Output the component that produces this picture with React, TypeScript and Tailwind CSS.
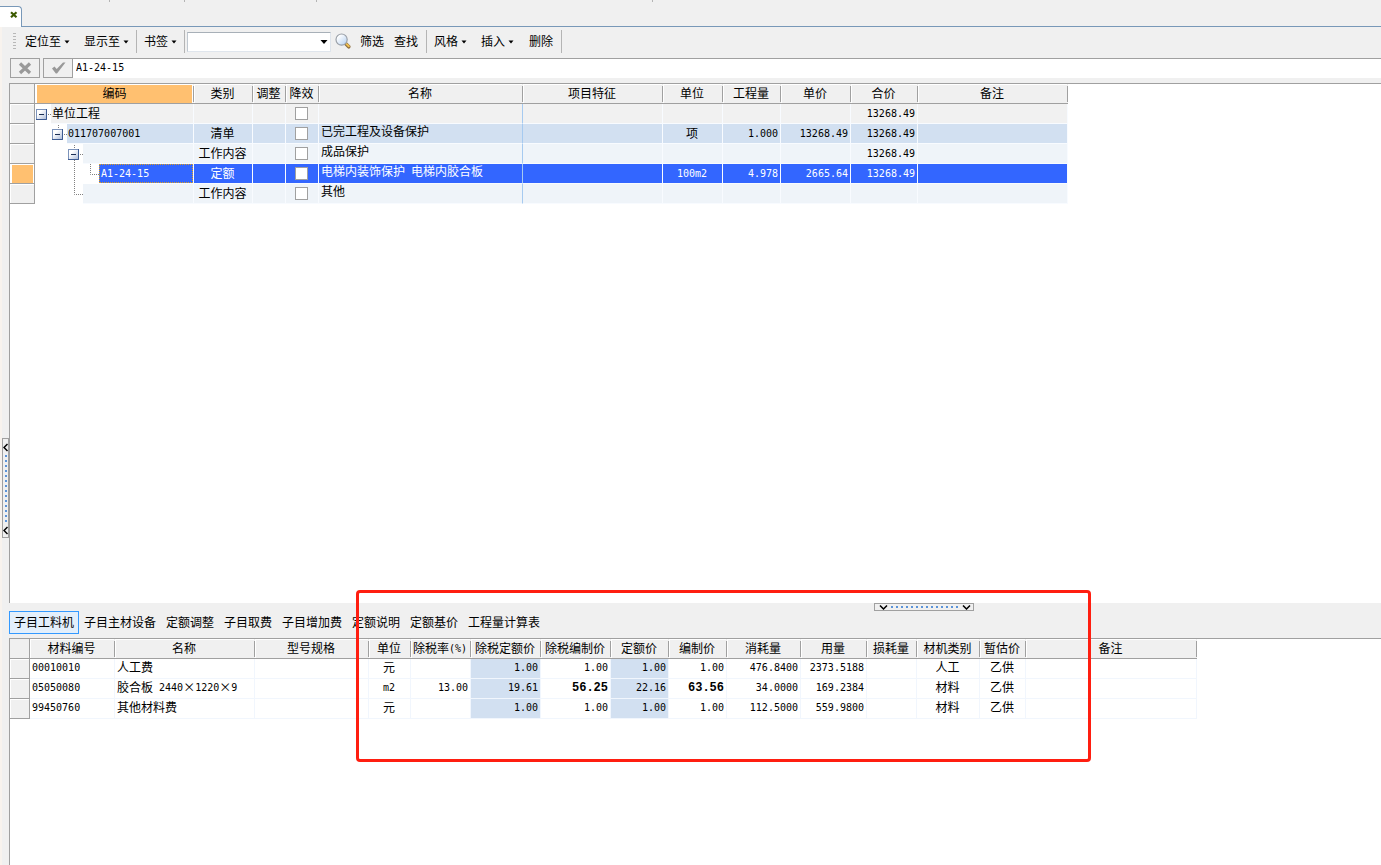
import type { ReactNode } from 'react';

type Align = 'left' | 'center' | 'right';

interface Column {
  title: string;
  width: number;
  align: Align;
  shaded?: boolean;
}

interface WorkItem {
  level: number;
  expandable: boolean;
  tone: 'root' | 'list' | 'plain' | 'selected';
  cells: string[];
}

const workColumns: Column[] = [
  { title: '编码', width: 159, align: 'left' },
  { title: '类别', width: 59, align: 'center' },
  { title: '调整', width: 33, align: 'center' },
  { title: '降效', width: 33, align: 'center' },
  { title: '名称', width: 204, align: 'left' },
  { title: '项目特征', width: 140, align: 'left' },
  { title: '单位', width: 60, align: 'center' },
  { title: '工程量', width: 58, align: 'right' },
  { title: '单价', width: 70, align: 'right' },
  { title: '合价', width: 67, align: 'right' },
  { title: '备注', width: 150, align: 'left' },
];

const workItems: WorkItem[] = [
  { level: 1, expandable: true, tone: 'root', cells: ['单位工程', '', '', '', '', '', '', '', '', '13268.49', ''] },
  { level: 2, expandable: true, tone: 'list', cells: ['011707007001', '清单', '', '', '已完工程及设备保护', '', '项', '1.000', '13268.49', '13268.49', ''] },
  { level: 3, expandable: true, tone: 'plain', cells: ['', '工作内容', '', '', '成品保护', '', '', '', '', '13268.49', ''] },
  { level: 4, expandable: false, tone: 'selected', cells: ['A1-24-15', '定额', '', '', '电梯内装饰保护 电梯内胶合板', '', '100m2', '4.978', '2665.64', '13268.49', ''] },
  { level: 3, expandable: false, tone: 'plain', cells: ['', '工作内容', '', '', '其他', '', '', '', '', '', ''] },
];

const materialColumns: Column[] = [
  { title: '材料编号', width: 85, align: 'left' },
  { title: '名称', width: 140, align: 'left' },
  { title: '型号规格', width: 114, align: 'left' },
  { title: '单位', width: 42, align: 'center' },
  { title: '除税率(%)', width: 60, align: 'right' },
  { title: '除税定额价', width: 70, align: 'right', shaded: true },
  { title: '除税编制价', width: 70, align: 'right' },
  { title: '定额价', width: 58, align: 'right', shaded: true },
  { title: '编制价', width: 58, align: 'right' },
  { title: '消耗量', width: 74, align: 'right' },
  { title: '用量', width: 66, align: 'right' },
  { title: '损耗量', width: 50, align: 'right' },
  { title: '材机类别', width: 63, align: 'center' },
  { title: '暂估价', width: 46, align: 'center' },
  { title: '备注', width: 171, align: 'left' },
];

const materials: string[][] = [
  ['00010010', '人工费', '', '元', '', '1.00', '1.00', '1.00', '1.00', '476.8400', '2373.5188', '', '人工', '乙供', ''],
  ['05050080', '胶合板 2440×1220×9', '', 'm2', '13.00', '19.61', '56.25', '22.16', '63.56', '34.0000', '169.2384', '', '材料', '乙供', ''],
  ['99450760', '其他材料费', '', '元', '', '1.00', '1.00', '1.00', '1.00', '112.5000', '559.9800', '', '材料', '乙供', ''],
];

const boldValues = ['56.25', '63.56'];

const detailTabs = ['子目工料机', '子目主材设备', '定额调整', '子目取费', '子目增加费', '定额说明', '定额基价', '工程量计算表'];

const toneClass = {
  root: 'bg-[#f1f1f1]',
  list: 'bg-[#d2e0f1]',
  plain: 'bg-[#eff4f9]',
  selected: 'bg-[#3366ff] text-white',
};

const alignClass = {
  left: 'justify-start pl-0.5',
  center: 'justify-center pr-px',
  right: 'justify-end pr-0.5',
};

// Latin runs use a half-width mono face, everything else stays in the CJK face
function Runs({ text, bold }: { text: string; bold?: boolean }) {
  const runs = text.match(/[\x20-\x7e]+|[^\x20-\x7e]+/g) ?? [];
  return (
    <>
      {runs.map((run, i) =>
        /^[\x20-\x7e]/.test(run) ? (
          <span
            key={i}
            className={
              bold
                ? "whitespace-pre font-['Liberation_Mono',monospace] text-[12px] font-bold"
                : "whitespace-pre font-['DejaVu_Sans_Mono',monospace] text-[10px]"
            }
          >
            {run}
          </span>
        ) : (
          <span key={i} className="pb-0.5 whitespace-pre">{run}</span>
        ),
      )}
    </>
  );
}

function Caret() {
  return (
    <svg width="6" height="4" viewBox="0 0 6 4" aria-hidden="true">
      <path d="M0.5 0.5h5L3 3.5z" fill="#000" />
    </svg>
  );
}

function MenuButton({ children }: { children: ReactNode }) {
  return (
    <button className="flex h-6 shrink-0 items-center gap-[3px] px-[7px] hover:bg-[#e3effb]">
      <span className="pb-0.5">{children}</span>
      <Caret />
    </button>
  );
}

function Divider() {
  return <span className="h-[23px] w-px shrink-0 bg-[#b4b4b4]" />;
}

function SearchIcon() {
  return (
    <svg width="17" height="17" viewBox="0 0 17 17" aria-hidden="true">
      <defs>
        <linearGradient id="lens" x1="0" y1="0" x2="1" y2="1">
          <stop offset="0.2" stopColor="#ffffff" />
          <stop offset="1" stopColor="#b0cdf0" />
        </linearGradient>
      </defs>
      <path d="M10.8 10.8l3 3" stroke="#8a6a3c" strokeWidth="3.6" strokeLinecap="round" />
      <path d="M11.6 11.1l2.2 2.2" stroke="#f0c050" strokeWidth="2" strokeLinecap="round" />
      <circle cx="6.6" cy="6.6" r="5.6" fill="url(#lens)" stroke="#9aa0a8" strokeWidth="1.2" />
    </svg>
  );
}

function HeaderRow({ columns, active }: { columns: Column[]; active?: string }) {
  return (
    <thead>
      <tr>
        <th className="h-5 border-r border-b border-[#a0a0a0] bg-[#f0f0f0] p-0" />
        {columns.map((col) => (
          <th key={col.title} className="h-5 border-b border-[#a0a0a0] bg-[#f0f0f0] p-0 font-normal">
            <div className="flex h-[19px] items-center">
              <div
                className={`flex h-[19px] min-w-0 flex-1 items-center justify-center border-t border-white ${
                  col.title === active ? 'border-r border-l-2 bg-[#ffc070]' : 'border-l pr-0.5'
                }`}
              >
                <Runs text={col.title} />
              </div>
              <span className="h-4 w-px bg-[#a0a0a0]" />
            </div>
          </th>
        ))}
      </tr>
    </thead>
  );
}

function ColGroup({ first, columns }: { first: number; columns: Column[] }) {
  return (
    <colgroup>
      <col style={{ width: first }} />
      {columns.map((col) => (
        <col key={col.title} style={{ width: col.width }} />
      ))}
    </colgroup>
  );
}

function RowHandle({ active }: { active?: boolean }) {
  return (
    <td className="h-5 border-r border-b border-[#a0a0a0] p-0">
      <div className={`h-[19px] border-t border-white ${active ? 'border-r border-l-2 bg-[#ffc070]' : 'border-l bg-[#f0f0f0]'}`} />
    </td>
  );
}

// Dotted connectors and the expander box in front of a code
function TreeLines({ item, last }: { item: WorkItem; last: boolean }) {
  const width = item.level * 16;
  const x = width - 15;
  return (
    <svg width={width} height="20" viewBox={`0 0 ${width} 20`} className="-mb-px shrink-0 bg-white" aria-hidden="true">
      <defs>
        <linearGradient id="box" x1="0" y1="0" x2="1" y2="1">
          <stop offset="0.3" stopColor="#ffffff" />
          <stop offset="1" stopColor="#a9b9d8" />
        </linearGradient>
      </defs>
      <g stroke="#808080" strokeDasharray="1 1" fill="none">
        {item.tone === 'selected' && <path d="M39.5 0v20M55.5 0v10.5H64" />}
        {last && <path d="M39.5 0v10.5H48" />}
        {item.expandable && item.level > 1 && <path d={`M${x + 6.5} 1v4`} />}
        {item.expandable && <path d={`M${x + 12} 10.5h4`} />}
        {item.expandable && item.level === 3 && <path d="M39.5 16v4" />}
      </g>
      {item.expandable && (
        <g>
          <rect x={x + 0.5} y="5.5" width="10" height="10" fill="url(#box)" stroke="#7c93bb" />
          <path d={`M${x + 10.5} 5v10.5H${x}`} stroke="#3c5a92" fill="none" />
          <path d={`M${x + 3} 10.5h5`} stroke="#1c2f55" />
        </g>
      )}
    </svg>
  );
}

function WorkTable() {
  return (
    <table className="w-[1059px] table-fixed border-separate border-spacing-0 border-l border-[#a0a0a0]">
      <ColGroup first={25} columns={workColumns} />
      <HeaderRow columns={workColumns} active="编码" />
      <tbody>
        {workItems.map((item, row) => (
          <tr key={row} className={toneClass[item.tone]}>
            <RowHandle active={item.tone === 'selected'} />
            {item.cells.map((text, i) => {
              const col = workColumns[i];
              if (i === 0) {
                return (
                  <td key={i} className="h-5 border-r border-b border-[#f8fbff] p-0">
                    <div className="flex h-[19px] items-center">
                      <TreeLines item={item} last={row === workItems.length - 1} />
                      <div
                        className={`flex h-[19px] flex-1 items-center ${
                          item.tone === 'selected' ? 'border border-dotted border-[#e0a020] pl-px' : 'pl-px'
                        }`}
                      >
                        <Runs text={text} />
                      </div>
                    </div>
                  </td>
                );
              }
              return (
                <td
                  key={i}
                  className={`h-5 border-r border-b p-0 ${i === 4 ? 'border-r-[#a6caf0] border-b-[#f8fbff]' : 'border-[#f8fbff]'}`}
                >
                  <div className={`flex h-[19px] items-center ${alignClass[col.align]} ${i === 4 ? 'pb-1' : ''}`}>
                    {i === 3 ? (
                      <input
                        type="checkbox"
                        aria-label={`降效 ${row + 1}`}
                        className="size-[13px] appearance-none border border-[#a0a0a0] bg-white checked:bg-[#3366ff]"
                      />
                    ) : (
                      <Runs text={text} />
                    )}
                  </div>
                </td>
              );
            })}
          </tr>
        ))}
      </tbody>
    </table>
  );
}

function MaterialTable() {
  return (
    <table className="w-[1188px] table-fixed border-separate border-spacing-0 border-l border-[#a0a0a0]">
      <ColGroup first={20} columns={materialColumns} />
      <HeaderRow columns={materialColumns} />
      <tbody>
        {materials.map((cells) => (
          <tr key={cells[0]}>
            <RowHandle />
            {cells.map((text, i) => (
              <td
                key={i}
                className={`h-5 border-r border-b border-[#f1f6fd] p-0 ${materialColumns[i].shaded ? 'bg-[#d2e0f1]' : ''}`}
              >
                <div className={`flex h-[19px] items-center pb-0.5 ${alignClass[materialColumns[i].align]}`}>
                  <Runs text={text} bold={boldValues.includes(text)} />
                </div>
              </td>
            ))}
          </tr>
        ))}
      </tbody>
    </table>
  );
}

export default function App() {
  return (
    <div className="flex h-screen flex-col overflow-hidden bg-[#f0f0f0] font-['Noto_Sans_CJK_SC',sans-serif] text-[12px] leading-4 text-black">
      {/* Document tab strip */}
      <header className="flex h-[27px] shrink-0 flex-col justify-between">
        <div className="flex h-0.5">
          <span className="w-[110px] border-r border-[#b4b4b4]" />
          <span className="w-[75px] border-r border-[#b4b4b4]" />
          <span className="w-[132px] border-r border-[#b4b4b4]" />
          <span className="w-[336px] border-r border-[#b4b4b4]" />
        </div>
        <div className="flex h-[21px]">
          <div className="flex w-[22px] justify-end rounded-tr-sm border-t border-r border-[#7898b8] bg-white pt-1 pr-[3px]">
            <button aria-label="关闭" className="h-2 w-2">
              <svg width="8" height="8" viewBox="0 0 8 8">
                <path d="M1 1.2l5.5 5M6.5 1.2L1 6.2" stroke="#3c5a00" strokeWidth="2.2" />
              </svg>
            </button>
          </div>
          <div className="flex-1 border-b border-[#7898b8]" />
        </div>
      </header>

      <div className="flex min-h-0 flex-1">
        {/* Collapsed side panel handle */}
        <aside className="flex w-[9px] shrink-0 flex-col justify-center border-l-2 border-[#f8f3ee] pt-[84px]">
          <button aria-label="展开侧栏" className="flex h-[100px] w-[7px] flex-col items-center justify-between border border-[#a0a0a0] pt-1 pb-0.5">
            <svg width="5" height="9" viewBox="0 0 5 9">
              <path d="M4.5 1L1 4.5 4.5 8" stroke="#000" strokeWidth="1.5" fill="none" />
            </svg>
            <svg width="2" height="68" viewBox="0 0 2 68">
              <path d="M1 0v68" stroke="#5b93d8" strokeWidth="2" strokeDasharray="2 3" />
            </svg>
            <svg width="5" height="9" viewBox="0 0 5 9">
              <path d="M4.5 1L1 4.5 4.5 8" stroke="#000" strokeWidth="1.5" fill="none" />
            </svg>
          </button>
        </aside>

        <main className="flex min-w-0 flex-1 flex-col">
          <div className="flex h-[31px] shrink-0 items-center pb-0.5">
            <span className="mr-0.5 ml-1 h-[18px] w-[3px] bg-[repeating-linear-gradient(to_bottom,#b8b8b8_0_1px,transparent_1px_3px)]" />
            <MenuButton>定位至</MenuButton>
            <MenuButton>显示至</MenuButton>
            <Divider />
            <MenuButton>书签</MenuButton>
            <Divider />
            <div className="relative ml-0.5 shrink-0">
              <select aria-label="书签名称" className="block h-5 w-36 appearance-none border border-[#dfe5ec] border-t-[#a8b0b8] border-l-[#c0c8d0] bg-white">
                <option value=""></option>
              </select>
              <svg width="8" height="5" viewBox="0 0 8 5" className="pointer-events-none absolute top-2 right-[3px]">
                <path d="M0.5 0h7L4 4z" fill="#000" />
              </svg>
            </div>
            <button aria-label="搜索" className="pr-[3px] pl-1">
              <SearchIcon />
            </button>
            <button className="h-6 px-[5px] pb-0.5 hover:bg-[#e3effb]">筛选</button>
            <button className="mr-[3px] h-6 px-[5px] pb-0.5 hover:bg-[#e3effb]">查找</button>
            <Divider />
            <MenuButton>风格</MenuButton>
            <MenuButton>插入</MenuButton>
            <button className="h-6 px-2 pb-0.5 hover:bg-[#e3effb]">删除</button>
            <Divider />
          </div>

          {/* Cell editor */}
          <div className="mb-[5px] flex h-5 shrink-0 pl-px">
            <button aria-label="取消" className="mr-[3px] flex w-[30px] items-center justify-center border border-[#a0a0a0]">
              <svg width="14" height="14" viewBox="0 0 14 14">
                <path d="M2 2.5l10 9.5M12 2.5L2 12" stroke="#999" strokeWidth="3.2" />
              </svg>
            </button>
            <button aria-label="确定" className="flex w-[30px] items-center justify-center border border-[#a0a0a0]">
              <svg width="15" height="14" viewBox="0 0 15 14">
                <path d="M1 7.5l2.5-2 2.2 2.6L12 1.5h2.5L6 12.5H4.8z" fill="#999" />
              </svg>
            </button>
            <input
              aria-label="单元格内容"
              defaultValue="A1-24-15"
              className="min-w-0 flex-1 border-t border-[#a0a0a0] bg-white pb-0.5 pl-[3px] font-['DejaVu_Sans_Mono',monospace] text-[10px] outline-none"
            />
          </div>

          <section className="min-h-0 flex-1 overflow-hidden border-t border-[#a0a0a0] bg-white">
            <div className="h-full border-l border-[#a0a0a0]">
              <div className="-ml-px">
                <WorkTable />
              </div>
            </div>
          </section>

          {/* Detail pane */}
          <section className="relative flex h-[262px] shrink-0 flex-col">
            <div className="flex h-2 shrink-0 justify-center pl-[458px]">
              <button aria-label="收起明细" className="flex w-[100px] items-center justify-between border border-[#a0a0a0] pr-0.5 pl-1">
                <svg width="9" height="5" viewBox="0 0 9 5">
                  <path d="M1 0.5L4.5 4 8 0.5" stroke="#000" strokeWidth="1.5" fill="none" />
                </svg>
                <svg width="68" height="2" viewBox="0 0 68 2">
                  <path d="M0 1h68" stroke="#5b93d8" strokeWidth="2" strokeDasharray="2 3" />
                </svg>
                <svg width="9" height="5" viewBox="0 0 9 5">
                  <path d="M1 0.5L4.5 4 8 0.5" stroke="#000" strokeWidth="1.5" fill="none" />
                </svg>
              </button>
            </div>
            <nav className="mb-1 flex h-[23px] shrink-0">
              {detailTabs.map((tab, i) => (
                <button
                  key={tab}
                  className={`border px-1 pb-0.5 ${i === 0 ? 'border-[#3399ff] bg-[#e3effb]' : 'border-transparent hover:bg-[#e3effb]'}`}
                >
                  {tab}
                </button>
              ))}
            </nav>
            <div className="min-h-0 flex-1 overflow-hidden border-t border-[#a0a0a0] bg-white">
              <div className="h-full border-l border-[#a0a0a0]">
                <div className="-ml-px">
                  <MaterialTable />
                </div>
              </div>
            </div>

            {/* Highlight frame over the price columns */}
            <div className="pointer-events-none absolute -top-[13px] left-[347px] h-[172px] w-[735px] rounded-sm border-3 border-[#ff1e10]" />
          </section>
        </main>
      </div>
    </div>
  );
}
